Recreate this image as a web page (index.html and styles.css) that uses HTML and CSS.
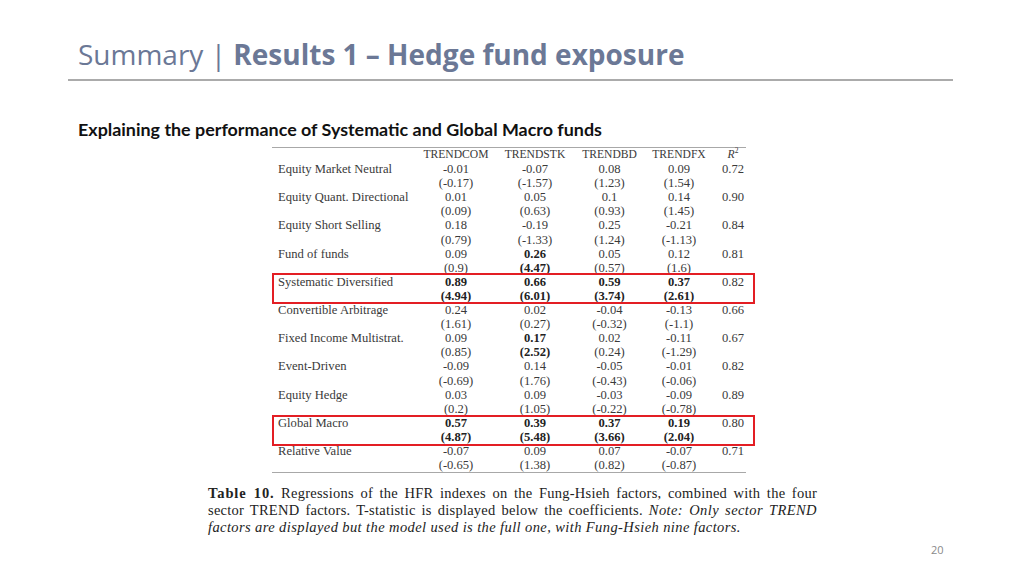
FILE: index.html
```html
<!DOCTYPE html>
<html>
<head>
<meta charset="utf-8">
<link rel="stylesheet" href="styles.css">
</head>
<body>
<div class="slide">
  <header class="head">
    <h1 class="title"><span class="light">Summary | </span><span class="strong">Results 1 – Hedge fund exposure</span></h1>
  </header>
  <h2 class="sub">Explaining the performance of Systematic and Global Macro funds</h2>
  <div class="figure">
    <div class="tablewrap">
      <table class="reg">
        <colgroup><col class="c0"><col class="c1"><col class="c2"><col class="c3"><col class="c4"><col class="c5"></colgroup>
        <thead>
          <tr><th></th><th>TRENDCOM</th><th>TRENDSTK</th><th>TRENDBD</th><th>TRENDFX</th><th class="r2"><i>R</i><sup>2</sup></th></tr>
        </thead>
        <tbody>
          <tr><td>Equity Market Neutral</td><td>-0.01</td><td>-0.07</td><td>0.08</td><td>0.09</td><td>0.72</td></tr>
          <tr><td></td><td>(-0.17)</td><td>(-1.57)</td><td>(1.23)</td><td>(1.54)</td><td></td></tr>
          <tr><td>Equity Quant. Directional</td><td>0.01</td><td>0.05</td><td>0.1</td><td>0.14</td><td>0.90</td></tr>
          <tr><td></td><td>(0.09)</td><td>(0.63)</td><td>(0.93)</td><td>(1.45)</td><td></td></tr>
          <tr><td>Equity Short Selling</td><td>0.18</td><td>-0.19</td><td>0.25</td><td>-0.21</td><td>0.84</td></tr>
          <tr><td></td><td>(0.79)</td><td>(-1.33)</td><td>(1.24)</td><td>(-1.13)</td><td></td></tr>
          <tr><td>Fund of funds</td><td>0.09</td><td><b>0.26</b></td><td>0.05</td><td>0.12</td><td>0.81</td></tr>
          <tr><td></td><td>(0.9)</td><td><b>(4.47)</b></td><td>(0.57)</td><td>(1.6)</td><td></td></tr>
          <tr><td>Systematic Diversified</td><td><b>0.89</b></td><td><b>0.66</b></td><td><b>0.59</b></td><td><b>0.37</b></td><td>0.82</td></tr>
          <tr><td></td><td><b>(4.94)</b></td><td><b>(6.01)</b></td><td><b>(3.74)</b></td><td><b>(2.61)</b></td><td></td></tr>
          <tr><td>Convertible Arbitrage</td><td>0.24</td><td>0.02</td><td>-0.04</td><td>-0.13</td><td>0.66</td></tr>
          <tr><td></td><td>(1.61)</td><td>(0.27)</td><td>(-0.32)</td><td>(-1.1)</td><td></td></tr>
          <tr><td>Fixed Income Multistrat.</td><td>0.09</td><td><b>0.17</b></td><td>0.02</td><td>-0.11</td><td>0.67</td></tr>
          <tr><td></td><td>(0.85)</td><td><b>(2.52)</b></td><td>(0.24)</td><td>(-1.29)</td><td></td></tr>
          <tr><td>Event-Driven</td><td>-0.09</td><td>0.14</td><td>-0.05</td><td>-0.01</td><td>0.82</td></tr>
          <tr><td></td><td>(-0.69)</td><td>(1.76)</td><td>(-0.43)</td><td>(-0.06)</td><td></td></tr>
          <tr><td>Equity Hedge</td><td>0.03</td><td>0.09</td><td>-0.03</td><td>-0.09</td><td>0.89</td></tr>
          <tr><td></td><td>(0.2)</td><td>(1.05)</td><td>(-0.22)</td><td>(-0.78)</td><td></td></tr>
          <tr><td>Global Macro</td><td><b>0.57</b></td><td><b>0.39</b></td><td><b>0.37</b></td><td><b>0.19</b></td><td>0.80</td></tr>
          <tr><td></td><td><b>(4.87)</b></td><td><b>(5.48)</b></td><td><b>(3.66)</b></td><td><b>(2.04)</b></td><td></td></tr>
          <tr><td>Relative Value</td><td>-0.07</td><td>0.09</td><td>0.07</td><td>-0.07</td><td>0.71</td></tr>
          <tr><td></td><td>(-0.65)</td><td>(1.38)</td><td>(0.82)</td><td>(-0.87)</td><td></td></tr>
        </tbody>
      </table>
      <div class="hlbox hl1"></div>
      <div class="hlbox hl2"></div>
    </div>
    <p class="caption">
      <span class="line j"><b>Table 10.</b> Regressions of the HFR indexes on the Fung-Hsieh factors, combined with the four</span>
      <span class="line j">sector TREND factors. T-statistic is displayed below the coefficients. <i>Note: Only sector TREND</i></span>
      <span class="line"><i>factors are displayed but the model used is the full one, with Fung-Hsieh nine factors.</i></span>
    </p>
  </div>
  <div class="pagenum">20</div>
</div>
</body>
</html>
```

FILE: styles.css
```css
html, body {
  margin: 0;
  padding: 0;
  background: #ffffff;
}
.slide {
  width: 1024px;
  height: 575px;
  position: relative;
  overflow: hidden;
  font-family: "Open Sans", "Noto Sans", sans-serif;
}
.head {
  margin: 0 71px 0 68px;
  padding: 36px 0 7px 10px;
  border-bottom: 2px solid #ababab;
}
.title {
  margin: 0;
  font-size: 28px;
  line-height: 36px;
  font-weight: 400;
  color: #6b7896;
  white-space: nowrap;
}
.title .light {
  font-weight: 400;
}
.title .strong {
  font-weight: 700;
}
.sub {
  margin: 38px 0 0 78px;
  font-family: "Lato", "Open Sans", sans-serif;
  font-weight: 700;
  font-size: 17.9px;
  line-height: 20px;
  color: #111111;
}
.figure {
  margin-left: 208px;
  width: 609px;
}
.tablewrap {
  position: relative;
  margin-left: 64px;
  margin-top: 8px;
  width: 474px;
}
.reg {
  border-collapse: collapse;
  table-layout: fixed;
  width: 474px;
  font-family: "Liberation Serif", "DejaVu Serif", serif;
  font-size: 12.6px;
  color: #3a3a3a;
  border-top: 1.5px solid #a8a8a8;
  border-bottom: 1.5px solid #a8a8a8;
}
.reg col.c0 { width: 151px; }
.reg col.c1 { width: 66px; }
.reg col.c2 { width: 92px; }
.reg col.c3 { width: 57px; }
.reg col.c4 { width: 82px; }
.reg col.c5 { width: 26px; }
.reg th, .reg td {
  padding: 0;
  height: 14.1px;
  line-height: 14.1px;
  text-align: center;
  white-space: nowrap;
  font-weight: 400;
}
.reg th {
  font-size: 11.6px;
}
.reg td:first-child {
  text-align: left;
  padding-left: 6px;
}
.reg b {
  font-weight: 700;
  color: #222;
}
.reg sup {
  font-size: 7.5px;
  line-height: 0;
  vertical-align: 5px;
}
.hlbox {
  position: absolute;
  left: 0;
  width: 479px;
  height: 27px;
  border: 2px solid #e31e24;
}
.hl1 { top: 126px; }
.hl2 { top: 268px; }
.caption {
  margin: 12px 0 0 0;
  font-family: "Liberation Serif", "DejaVu Serif", serif;
  font-size: 14.5px;
  line-height: 17px;
  letter-spacing: 0.25px;
  color: #222222;
}
.caption b {
  letter-spacing: 0.9px;
}
.caption i {
  letter-spacing: 0.4px;
}
.caption .line {
  display: block;
  white-space: nowrap;
}
.caption .line.j {
  text-align: justify;
  text-align-last: justify;
}
.pagenum {
  position: absolute;
  left: 931px;
  top: 542px;
  font-family: "Open Sans", sans-serif;
  font-size: 11px;
  color: #8a8a8a;
}
```
